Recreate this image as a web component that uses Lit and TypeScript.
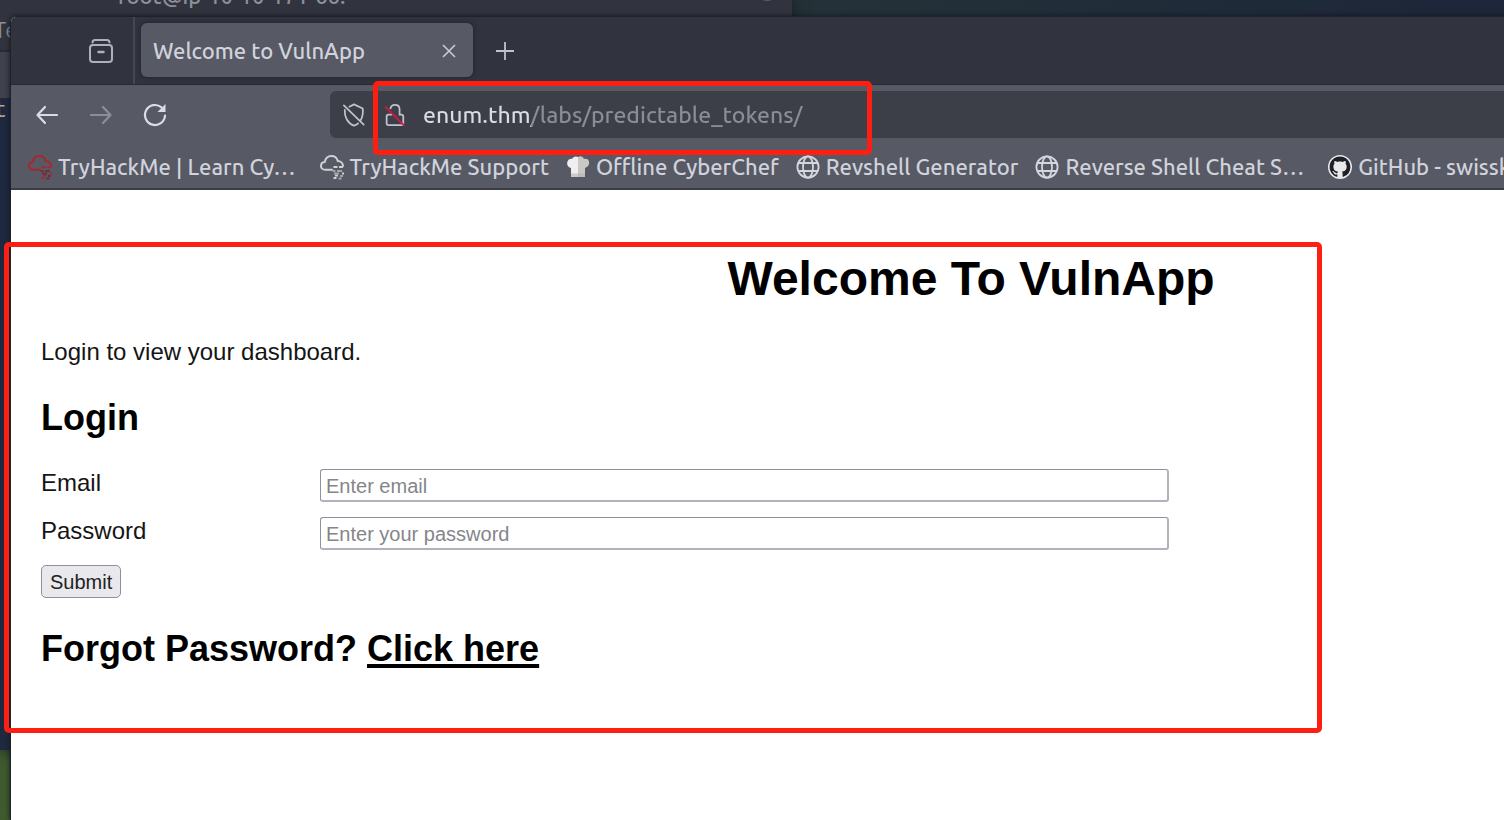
import { LitElement, html, css, svg } from "lit";
import { customElement } from "lit/decorators.js";

const globe = svg`<g fill="none" stroke="#d3d6de" stroke-width="1.8"><circle cx="12" cy="12" r="10.6"/><ellipse cx="12" cy="12" rx="5" ry="10.6"/><path d="M2.6 8h18.8M2.6 16h18.8"/></g>`;

const cloud = (main: string, rain: string) => svg`
  <path d="M12 14.800H5.200C2.600 14.800 1 13 1 10.900 1 8.700 2.600 7 4.800 6.900 5.600 3 8.200 1 11.400 1c3.200 0 5.600 2 6.300 4.900 3 .1 5.300 2.100 5.300 5.100" fill="none" stroke="${main}" stroke-width="2" stroke-linecap="round"/>
  <path d="M13.500 12h4M19 12h4M15 20.500h3M22 18.500h2M13.500 23h3" stroke="${main}" stroke-width="1.800"/>
  <path d="M12.500 16h3M17 16h5M14 18.500h5M20 21h3M18.500 23.500h3" stroke="${rain}" stroke-width="1.800"/>`;

const chefHat = svg`
  <path d="M5 22V13C1.500 12 .5 9 1.500 6.500 2.500 4 5 3.500 6 4 7 1.500 10 .8 12 2v20z" fill="#efefef"/>
  <path d="M12 2c2.500-1.500 5-.500 6 2 2-.5 4.500 0 5 2.500.7 3-.500 5-4 6.500v9h-7z" fill="#c9c8c6"/>
  <path d="M5 18.500h14V22H5z" fill="#b5b3af" opacity=".6"/>`;

const octocat = svg`
  <circle cx="12" cy="12" r="12" fill="#e9e9ea"/>
  <path transform="translate(1.600 1.600) scale(1.300)" fill="#1d2026" d="M8 0C3.58 0 0 3.58 0 8c0 3.54 2.29 6.53 5.47 7.59.4.07.55-.17.55-.38 0-.19-.01-.82-.01-1.490-2.010.37-2.530-.49-2.690-.94-.090-.23-.48-.94-.82-1.130-.28-.150-.68-.52-.010-.53.63-.010 1.080.58 1.230.82.72 1.210 1.870.87 2.330.66.070-.52.28-.87.51-1.070-1.780-.2-3.640-.89-3.640-3.950 0-.87.310-1.590.82-2.150-.080-.2-.36-1.020.080-2.120 0 0 .67-.21 2.200.82.64-.18 1.320-.27 2-.27s1.360.090 2 .27c1.530-1.040 2.200-.82 2.200-.82.44 1.100.160 1.920.080 2.120.51.56.82 1.270.82 2.150 0 3.070-1.870 3.750-3.650 3.950.29.250.54.73.54 1.480 0 1.070-.010 1.930-.010 2.200 0 .21.150.46.55.38A8.010 8.010 0 0 0 16 8c0-4.420-3.580-8-8-8z"/>`;

const bookmarks = [
  { label: "TryHackMe | Learn Cy…", icon: cloud("#a8262c", "#6b3038"), wide: true },
  { label: "TryHackMe Support", icon: cloud("#d0d1d4", "#a3a5ab"), wide: false },
  { label: "Offline CyberChef", icon: chefHat, wide: false },
  { label: "Revshell Generator", icon: globe, wide: false },
  { label: "Reverse Shell Cheat S…", icon: globe, wide: true },
  { label: "GitHub - swisskyrepo", icon: octocat, wide: false },
];

@customElement("browser-chrome")
export class BrowserChrome extends LitElement {
  static styles = css`
    :host { display: block; color: #d0d3dc; font-family: Ubuntu, "Noto Sans", sans-serif; font-size: 22px; font-weight: 500; line-height: 28px; }
    svg { display: block; flex: none; overflow: visible; }
    button { display: grid; place-items: center; padding: 0; border: 0; background: none; color: inherit; width: 32px; height: 32px; }
    .tabs { display: flex; align-items: stretch; height: 67px; background: #31343f; }
    .recent { display: flex; align-items: center; justify-content: flex-end; width: 124px; padding-right: 16px; box-sizing: border-box; border-right: 2px solid #454852; }
    .tab { display: flex; align-items: center; justify-content: space-between; box-sizing: border-box; width: 332px; margin: 6px 0 7px 6px; padding: 1px 8px 0 12px; border-radius: 6px; background: #575965; box-shadow: 0 0 5px #1f2129; }
    .new { margin: 18px 16px; }
    .toolbar { display: flex; align-items: center; height: 60px; background: #575965; border-top: 1px solid #272932; box-sizing: border-box; }
    .nav { display: flex; gap: 22px; padding: 0 0 0 20px; width: 319px; box-sizing: border-box; }
    .off { opacity: .4; }
    .url { display: flex; flex: 1; align-items: center; height: 47px; padding-left: 12px; gap: 17px; border-radius: 6px; background: #3d3f48; }
    .address { flex: 1; margin-right: 20px; padding: 1px 0 0; border: 0; outline: 0; font: inherit; font-size: 23px; color: #8b8d95; background: linear-gradient(90deg, #d9dbe2 108px, #8b8d95 108px); -webkit-background-clip: text; background-clip: text; -webkit-text-fill-color: transparent; }
    .marks { display: flex; height: 46px; gap: 17px; align-items: center; padding: 1px 0 0 17px; background: #575965; border-bottom: 2px solid #3a3c46; box-sizing: border-box; }
    .mark { display: flex; flex: none; align-items: center; gap: 6px; color: inherit; text-decoration: none; white-space: nowrap; }
    .wide { margin-right: 7px; }
  `;

  render() {
    return html`
      <div class="tabs">
        <div class="recent">
          <button aria-label="Recent browsing">
            <svg width="26" height="26" viewBox="0 0 26 26" fill="none" stroke="#adb1bb" stroke-width="2" stroke-linecap="round"><path d="M4.500 4.500c0-2 1-2.500 2.500-2.500h12c1.500 0 2.500.5 2.500 2.500"/><rect x="2" y="7" width="22" height="17" rx="3"/><path d="M10.500 14h5" stroke-width="2.500"/></svg>
          </button>
        </div>
        <div class="tab">
          <span>Welcome to VulnApp</span>
          <button aria-label="Close tab"><svg width="14" height="14" viewBox="0 0 14 14" stroke="#c8cbd3" stroke-width="1.600"><path d="M1 1l12 12M13 1L1 13"/></svg></button>
        </div>
        <button class="new" aria-label="New tab"><svg width="18" height="18" viewBox="0 0 18 18" stroke="#bfc3cd" stroke-width="1.800"><path d="M9 0v18M0 9h18"/></svg></button>
      </div>
      <div class="toolbar">
        <div class="nav">
          <button aria-label="Back"><svg width="22" height="18" viewBox="0 0 22 18" fill="none" stroke="#d9dce5" stroke-width="2.200" stroke-linecap="round" stroke-linejoin="round"><path d="M21 9H1.500M9 1L1.500 9 9 17"/></svg></button>
          <button class="off" aria-label="Forward"><svg width="22" height="18" viewBox="0 0 22 18" fill="none" stroke="#d9dce5" stroke-width="2.200" stroke-linecap="round" stroke-linejoin="round"><path d="M1 9h19.500M13 1l7.500 8L13 17"/></svg></button>
          <button aria-label="Reload"><svg width="22" height="22" viewBox="0 0 22 22"><path d="M21 11.500A10 10 0 1 1 17.500 3.400" fill="none" stroke="#d9dce5" stroke-width="2.200" stroke-linecap="round"/><path d="M21.500 0v8h-8z" fill="#d9dce5"/></svg></button>
        </div>
        <div class="url">
          <svg width="24" height="24" viewBox="0 0 24 26" fill="none" stroke="#bfc2ca" stroke-width="1.900" stroke-linecap="round" stroke-linejoin="round"><path d="M7 4l5-2.500 9.500 4.500c.5 5-.3 9.500-2.500 13M16.500 22c-1.300 1.200-2.800 2-4.500 2.500C5 22 1.500 15 2 7.500M1 2.500l21.500 21"/></svg>
          <svg width="23" height="24" viewBox="-1 0 23 26" fill="none" stroke="#bfc2ca" stroke-width="1.900"><path d="M6 6.500C6.500 3.500 8.500 2 11 2c3 0 5 2 5 5v5M8 12.500H4c-1.500 0-2 .5-2 2v7.500c0 1.500.5 2 2 2h14c1.300 0 2-.5 2-2v-7.500c0-1.500-.5-2-2-2h-3"/><path d="M.5 4L21 24.500" stroke="#d5174b" stroke-width="2"/></svg>
          <input class="address" aria-label="Address" value="enum.thm/labs/predictable_tokens/" spellcheck="false" />
        </div>
      </div>
      <nav class="marks">
        ${bookmarks.map((b) => html`<a class="mark ${b.wide ? "wide" : ""}" href="#"><svg width="24" height="24" viewBox="0 0 24 24">${b.icon}</svg><span>${b.label}</span></a>`)}
      </nav>
    `;
  }
}

@customElement("login-page")
export class LoginPage extends LitElement {
  static styles = css`
    :host { display: block; box-sizing: border-box; padding: 61px 30px 60px; color: #000; background: #fff; font-family: "Liberation Sans", Arial, sans-serif; font-size: 24px; line-height: 28px; }
    h1, h2, p { margin: 0; }
    h1 { font-size: 48px; line-height: 56px; text-align: center; margin-bottom: 31px; }
    p { margin-bottom: 31px; color: #151515; }
    h2 { font-size: 36px; line-height: 42px; margin-bottom: 30px; }
    a { color: inherit; text-decoration: underline; text-decoration-thickness: 4px; text-underline-offset: 3px; }
    form { display: flex; flex-direction: column; align-items: flex-start; gap: 15px; margin-bottom: 30px; }
    .row { display: grid; width: 61%; grid-template-columns: 279px 1fr; color: #151515; }
    input { box-sizing: border-box; min-width: 0; height: 33px; margin: 0 7px 0 0; padding: 4px 5px 2px; border: 2px solid #b3b1bb; border-top-color: #92909c; border-left-color: #92909c; border-width: 1px 2px 2px 1px; border-radius: 3px; font: 20px "Liberation Sans", Arial, sans-serif; }
    input::placeholder { color: #85858a; opacity: 1; }
    button { height: 33px; padding: 1px 8px 0; border: 1px solid #8f8f9d; border-radius: 5px; background: #e9e9ed; color: #222; font: 20px "Liberation Sans", Arial, sans-serif; }
  `;

  render() {
    return html`
      <h1>Welcome To VulnApp</h1>
      <p>Login to view your dashboard.</p>
      <h2>Login</h2>
      <form @submit=${(e: Event) => e.preventDefault()}>
        <div class="row"><label for="email">Email</label><input id="email" type="email" placeholder="Enter email" /></div>
        <div class="row"><label for="password">Password</label><input id="password" type="password" placeholder="Enter your password" /></div>
        <button type="submit">Submit</button>
      </form>
      <h2>Forgot Password? <a href="#">Click here</a></h2>
    `;
  }
}

@customElement("app-root")
export class AppRoot extends LitElement {
  static styles = css`
    :host { display: block; position: relative; height: 100vh; overflow: hidden; background: linear-gradient(90deg, #243238 53%, #1d2739 95%); }
    .terminal { position: absolute; inset: 0 auto 70px 0; width: 792px; overflow: hidden; background: #1e2940; color: #8c9099; font: 22px/28px Ubuntu, "Noto Sans", sans-serif; box-shadow: 0 0 14px #151b20; }
    .desk { position: absolute; inset: auto auto 0 0; width: 20px; height: 90px; background: #3f5a2e; }
    .title { height: 16px; padding: 0 15px 0 118px; background: #31343f; display: flex; align-items: flex-end; justify-content: space-between; font-weight: 500; }
    .title span { line-height: 34px; margin-bottom: 3px; }
    .knob { width: 20px; height: 20px; margin-bottom: 15px; border-radius: 50%; background: #5b5e69; }
    .menu { height: 34px; background: #31343f; border-bottom: 2px solid #282a34; text-indent: -6px; }
    .gap { height: 46px; background: #3f414c; }
    .prompt { color: #b9a58a; font-family: "Liberation Mono", monospace; text-indent: -6px; }
    .window { position: absolute; inset: 16px auto 0 10px; box-sizing: border-box; width: 127.8%; border: 1px solid #20222a; border-bottom: 0; border-radius: 6px 0 0 0; overflow: hidden; background: #fff; }
    .shade { position: absolute; inset: 16px auto 0 10px; width: 127.8%; border-radius: 6px 0 0 0; box-shadow: 0 0 5px #15171d; }
    .frame { position: absolute; box-sizing: border-box; border: 5px solid #ff1f12; border-radius: 5px; pointer-events: none; }
    .address { left: 373px; top: 81px; width: 499px; height: 74px; }
    .content { left: 4px; top: 242px; width: 1318px; height: 491px; }
  `;

  render() {
    return html`
      <div class="desk"></div>
      <div class="terminal">
        <div class="title"><span>root@ip-10-10-171-66:</span><div class="knob"></div></div>
        <div class="menu">Te</div>
        <div class="gap"></div>
        <div class="prompt">t</div>
      </div>
      <div class="shade"></div>
      <div class="window">
        <browser-chrome></browser-chrome>
        <login-page></login-page>
      </div>
      <div class="frame address"></div>
      <div class="frame content"></div>
    `;
  }
}
